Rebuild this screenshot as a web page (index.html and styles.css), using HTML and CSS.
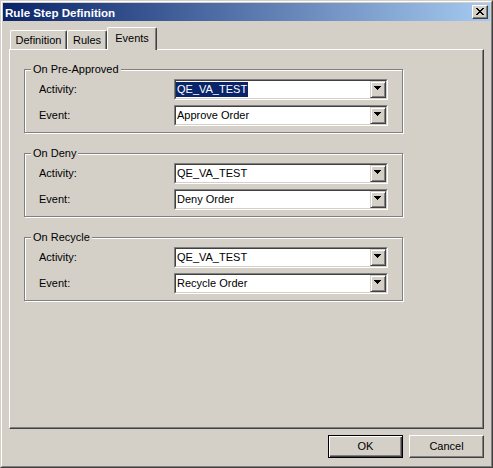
FILE: index.html
```html
<!DOCTYPE html>
<html>
<head>
<meta charset="utf-8">
<title>Rule Step Definition</title>
<link rel="stylesheet" href="styles.css">
</head>
<body>
<div class="window">
  <div class="frame">
    <div class="titlebar">
      <span class="title">Rule Step Definition</span>
      <div class="close-btn">
        <svg class="close-glyph" width="8" height="7" viewBox="0 0 8 7" shape-rendering="crispEdges"><path fill="#000" d="M0 0h2v1H0zM6 0h2v1H6zM1 1h2v1H1zM5 1h2v1H5zM2 2h4v1H2zM3 3h2v1H3zM2 4h4v1H2zM1 5h2v1H1zM5 5h2v1H5zM0 6h2v1H0zM6 6h2v1H6z"/></svg>
      </div>
    </div>
    <div class="client">
      <div class="tabs">
        <div class="tab tab-def">Definition</div>
        <div class="tab tab-rules">Rules</div>
        <div class="tab tab-events active">Events</div>
      </div>
      <div class="panel">
        <div class="group">
          <span class="legend">On Pre-Approved</span>
          <div class="rows">
            <div class="row">
              <span class="label">Activity:</span>
              <div class="combo"><div class="combo-inner"><div class="value"><span class="text selected">QE_VA_TEST</span></div><div class="drop"><svg class="arrow" width="7" height="4" viewBox="0 0 7 4" shape-rendering="crispEdges"><path fill="#000" d="M0 0h7v1H0zM1 1h5v1H1zM2 2h3v1H2zM3 3h1v1H3z"/></svg></div></div></div>
            </div>
            <div class="row">
              <span class="label">Event:</span>
              <div class="combo"><div class="combo-inner"><div class="value"><span class="text">Approve Order</span></div><div class="drop"><svg class="arrow" width="7" height="4" viewBox="0 0 7 4" shape-rendering="crispEdges"><path fill="#000" d="M0 0h7v1H0zM1 1h5v1H1zM2 2h3v1H2zM3 3h1v1H3z"/></svg></div></div></div>
            </div>
          </div>
        </div>
        <div class="group">
          <span class="legend">On Deny</span>
          <div class="rows">
            <div class="row">
              <span class="label">Activity:</span>
              <div class="combo"><div class="combo-inner"><div class="value"><span class="text">QE_VA_TEST</span></div><div class="drop"><svg class="arrow" width="7" height="4" viewBox="0 0 7 4" shape-rendering="crispEdges"><path fill="#000" d="M0 0h7v1H0zM1 1h5v1H1zM2 2h3v1H2zM3 3h1v1H3z"/></svg></div></div></div>
            </div>
            <div class="row">
              <span class="label">Event:</span>
              <div class="combo"><div class="combo-inner"><div class="value"><span class="text">Deny Order</span></div><div class="drop"><svg class="arrow" width="7" height="4" viewBox="0 0 7 4" shape-rendering="crispEdges"><path fill="#000" d="M0 0h7v1H0zM1 1h5v1H1zM2 2h3v1H2zM3 3h1v1H3z"/></svg></div></div></div>
            </div>
          </div>
        </div>
        <div class="group">
          <span class="legend">On Recycle</span>
          <div class="rows">
            <div class="row">
              <span class="label">Activity:</span>
              <div class="combo"><div class="combo-inner"><div class="value"><span class="text">QE_VA_TEST</span></div><div class="drop"><svg class="arrow" width="7" height="4" viewBox="0 0 7 4" shape-rendering="crispEdges"><path fill="#000" d="M0 0h7v1H0zM1 1h5v1H1zM2 2h3v1H2zM3 3h1v1H3z"/></svg></div></div></div>
            </div>
            <div class="row">
              <span class="label">Event:</span>
              <div class="combo"><div class="combo-inner"><div class="value"><span class="text">Recycle Order</span></div><div class="drop"><svg class="arrow" width="7" height="4" viewBox="0 0 7 4" shape-rendering="crispEdges"><path fill="#000" d="M0 0h7v1H0zM1 1h5v1H1zM2 2h3v1H2zM3 3h1v1H3z"/></svg></div></div></div>
            </div>
          </div>
        </div>
      </div>
      <div class="buttons">
        <button class="btn default">OK</button>
        <button class="btn">Cancel</button>
      </div>
    </div>
  </div>
</div>
</body>
</html>
```
FILE: styles.css
```css
* { box-sizing: border-box; }
html, body { margin: 0; padding: 0; }
body {
  width: 493px;
  height: 468px;
  overflow: hidden;
  background: #d4d0c8;
  font-family: "Liberation Sans", Arial, sans-serif;
  font-size: 11px;
  line-height: 13px;
  color: #000;
}
.window {
  width: 493px;
  height: 468px;
  border: 1px solid;
  border-color: #d4d0c8 #404040 #404040 #d4d0c8;
  background: #d4d0c8;
}
.frame {
  height: 100%;
  border: 1px solid;
  border-color: #fff #808080 #808080 #fff;
  padding: 1px;
  display: flex;
  flex-direction: column;
}
.titlebar {
  flex: none;
  height: 18px;
  display: flex;
  align-items: center;
  justify-content: space-between;
  padding: 0 2px 0 2px;
  background: linear-gradient(to right, #0a246a, #a6caf0);
}
.title {
  color: #fff;
  font-weight: bold;
  font-size: 11.6px;
}
.close-btn {
  width: 16px;
  height: 14px;
  background: #d4d0c8;
  border: 1px solid;
  border-color: #fff #404040 #404040 #fff;
  box-shadow: inset -1px -1px #808080;
  padding: 2px 0 0 3px;
}
.close-glyph { display: block; }
.client {
  flex: 1;
  display: flex;
  flex-direction: column;
  padding: 6px 6px 0 6px;
}
.tabs {
  flex: none;
  height: 22px;
  display: flex;
  align-items: flex-end;
  padding-left: 1px;
}
.tab {
  height: 19px;
  border: 1px solid;
  border-bottom: 0;
  border-color: #fff #404040 #fff #fff;
  box-shadow: inset -1px 0 #808080;
  border-radius: 2px 2px 0 0;
  text-align: center;
  padding-top: 3px;
  background: #d4d0c8;
}
.tab-def { width: 57px; }
.tab-rules { width: 40px; }
.tab-events {
  width: 50px;
  height: 23px;
  margin-bottom: -1px;
  padding-top: 4px;
  position: relative;
  z-index: 1;
}
.panel {
  flex: none;
  height: 380px;
  border: 1px solid;
  border-color: #fff #404040 #404040 #fff;
  box-shadow: inset -1px -1px #808080;
  padding: 19px 0 0 14px;
  display: flex;
  flex-direction: column;
  gap: 20px;
}
.group {
  width: 379px;
  border: 1px solid #808080;
  box-shadow: inset 1px 1px #fff, 1px 1px #fff;
  padding: 0 14px 6px 14px;
}
.legend {
  display: block;
  width: fit-content;
  margin: -7px 0 0 -8px;
  padding: 0 2px;
  background: #d4d0c8;
  line-height: 13px;
}
.rows {
  margin-top: 3px;
  display: flex;
  flex-direction: column;
  gap: 5px;
}
.row {
  display: flex;
  align-items: center;
}
.label {
  width: 135px;
  flex: none;
}
.combo {
  width: 214px;
  height: 21px;
  border: 1px solid;
  border-color: #808080 #fff #fff #808080;
}
.combo-inner {
  height: 100%;
  border: 1px solid;
  border-color: #404040 #d4d0c8 #d4d0c8 #404040;
  background: #fff;
  display: flex;
  align-items: center;
}
.value {
  flex: 1;
  display: flex;
  align-items: center;
}
.text {
  padding: 0 1px;
  line-height: 15px;
}
.text.selected {
  background: #0a246a;
  color: #fff;
}
.drop {
  width: 16px;
  height: 17px;
  flex: none;
  background: #d4d0c8;
  border: 1px solid;
  border-color: #d4d0c8 #404040 #404040 #d4d0c8;
  box-shadow: inset 1px 1px #fff, inset -1px -1px #808080;
  padding: 4px 0 0 3px;
}
.arrow { display: block; }
.buttons {
  display: flex;
  justify-content: flex-end;
  gap: 6px;
  padding-top: 6px;
}
.btn {
  width: 75px;
  height: 23px;
  padding: 0;
  font: inherit;
  color: #000;
  background: #d4d0c8;
  border: 1px solid;
  border-color: #fff #404040 #404040 #fff;
  border-radius: 0;
  box-shadow: inset -1px -1px #808080;
}
.btn.default {
  border-color: #000;
  box-shadow: inset 1px 1px #fff, inset -1px -1px #404040, inset -2px -2px #808080;
}
```
